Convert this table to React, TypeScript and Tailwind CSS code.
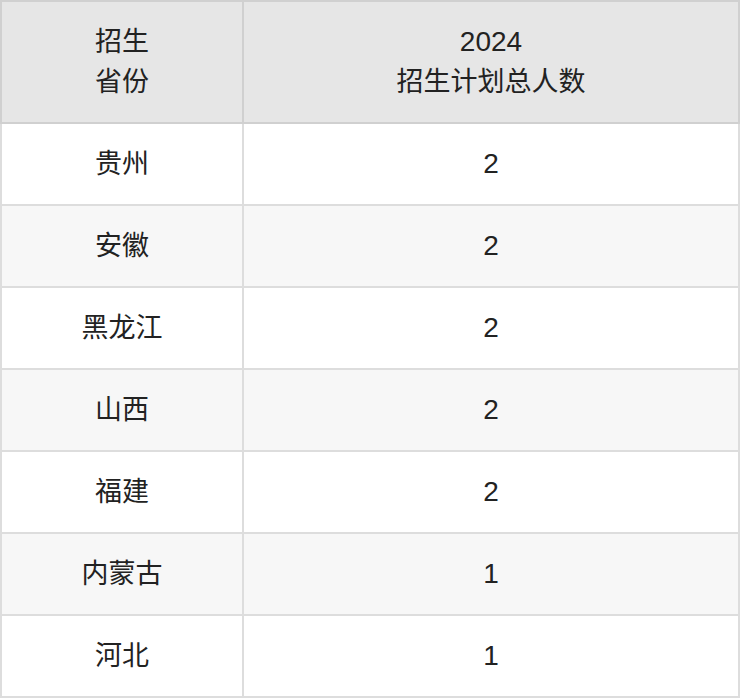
const rows: [string, string][] = [
  ["贵州", "2"],
  ["安徽", "2"],
  ["黑龙江", "2"],
  ["山西", "2"],
  ["福建", "2"],
  ["内蒙古", "1"],
  ["河北", "1"],
]

export default function App() {
  return (
    <div className="w-[740px] bg-white text-[#222] text-[27px] leading-[40px] font-['Liberation_Sans','Noto_Sans_CJK_SC',sans-serif]">
      <table className="w-full border-collapse table-fixed">
        <thead>
          <tr className="bg-[#e6e6e6] h-[122px]">
            <th className="w-[242px] border-2 border-[#d0d0d0] font-normal text-center">
              招生
              <br />
              省份
            </th>
            <th className="border-2 border-[#d0d0d0] font-normal text-center">
              <span className="text-[28px]">2024</span>
              <br />
              招生计划总人数
            </th>
          </tr>
        </thead>
        <tbody>
          {rows.map(([province, count], i) => (
            <tr key={province} className={`h-[82px] ${i % 2 === 1 ? "bg-[#f7f7f7]" : "bg-white"}`}>
              <td className="border-2 border-[#dddddd] text-center">{province}</td>
              <td className="border-2 border-[#dddddd] text-center text-[28px]">{count}</td>
            </tr>
          ))}
        </tbody>
      </table>
    </div>
  )
}
